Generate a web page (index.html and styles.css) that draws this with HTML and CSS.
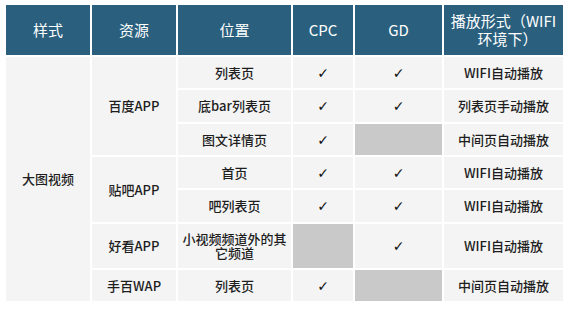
FILE: index.html
```html
<!DOCTYPE html>
<html lang="zh-CN">
<head>
<meta charset="utf-8">
<title>样式</title>
<link rel="stylesheet" href="styles.css">
</head>
<body>
<table class="grid">
  <colgroup>
    <col class="c1"><col class="c2"><col class="c3"><col class="c4"><col class="c5"><col class="c6">
  </colgroup>
  <thead>
    <tr class="head">
      <th>样式</th><th>资源</th><th>位置</th><th>CPC</th><th>GD</th>
      <th class="wrap"><div class="lines"><span class="ln">播放形式<span class="pn">（</span>WIFI</span><span class="ln ln2">环境下<span class="pn">）</span></span></div></th>
    </tr>
  </thead>
  <tbody>
    <tr class="r1">
      <td rowspan="7">大图视频</td>
      <td rowspan="3">百度APP</td>
      <td>列表页</td><td class="ck">✓</td><td class="ck">✓</td><td>WIFI自动播放</td>
    </tr>
    <tr class="r2">
      <td>底bar列表页</td><td class="ck">✓</td><td class="ck">✓</td><td>列表页手动播放</td>
    </tr>
    <tr class="r3">
      <td>图文详情页</td><td class="ck">✓</td><td class="na"></td><td>中间页自动播放</td>
    </tr>
    <tr class="r4">
      <td rowspan="2">贴吧APP</td>
      <td>首页</td><td class="ck">✓</td><td class="ck">✓</td><td>WIFI自动播放</td>
    </tr>
    <tr class="r5">
      <td>吧列表页</td><td class="ck">✓</td><td class="ck">✓</td><td>WIFI自动播放</td>
    </tr>
    <tr class="r6">
      <td>好看APP</td>
      <td class="tight">小视频频道外的其它频道</td><td class="na"></td><td class="ck">✓</td><td>WIFI自动播放</td>
    </tr>
    <tr class="r7">
      <td>手百WAP</td>
      <td>列表页</td><td class="ck">✓</td><td class="na"></td><td>中间页自动播放</td>
    </tr>
  </tbody>
</table>
</body>
</html>
```
FILE: styles.css
```css
html, body {
  margin: 0;
  padding: 0;
  background: #ffffff;
}
body {
  font-family: "Noto Sans CJK SC", "Open Sans", "DejaVu Sans", sans-serif;
}
.grid {
  margin: 3px 0 0 4px;
  border-collapse: collapse;
  table-layout: fixed;
  width: 559px;
}
.c1 { width: 86px; }
.c2 { width: 86px; }
.c3 { width: 115px; }
.c4 { width: 62px; }
.c5 { width: 89px; }
.c6 { width: 121px; }
.grid th, .grid td {
  border: 2px solid #ffffff;
  text-align: center;
  vertical-align: middle;
  padding: 0 4px;
}
.grid th {
  background: #2a5f7e;
  color: #ffffff;
  font-weight: normal;
  font-size: 15px;
  line-height: 18px;
}
.head { height: 52px; }
.grid th.wrap { padding: 0 1px; }
.lines {
  display: flex;
  flex-direction: column;
  align-items: center;
}
.ln {
  display: block;
  white-space: nowrap;
}
.ln2 { padding-left: 8px; }
.pn { font-family: "Noto Sans CJK TC", "Noto Sans CJK SC", sans-serif; }
.grid td {
  background: #f4f4f4;
  color: #1e1e1e;
  font-size: 13px;
  font-weight: 500;
  line-height: 14px;
}
.grid td.ck {
  font-family: "DejaVu Sans", sans-serif;
  font-weight: bold;
  color: #111111;
  font-size: 14px;
}
.grid td.na { background: #c9c9c9; }
.grid td.tight { padding: 0 2px; }
.r1 { height: 33px; }
.r2 { height: 34px; }
.r3 { height: 33px; }
.r4 { height: 33px; }
.r5 { height: 34px; }
.r6 { height: 46px; }
.r7 { height: 33px; }
```
